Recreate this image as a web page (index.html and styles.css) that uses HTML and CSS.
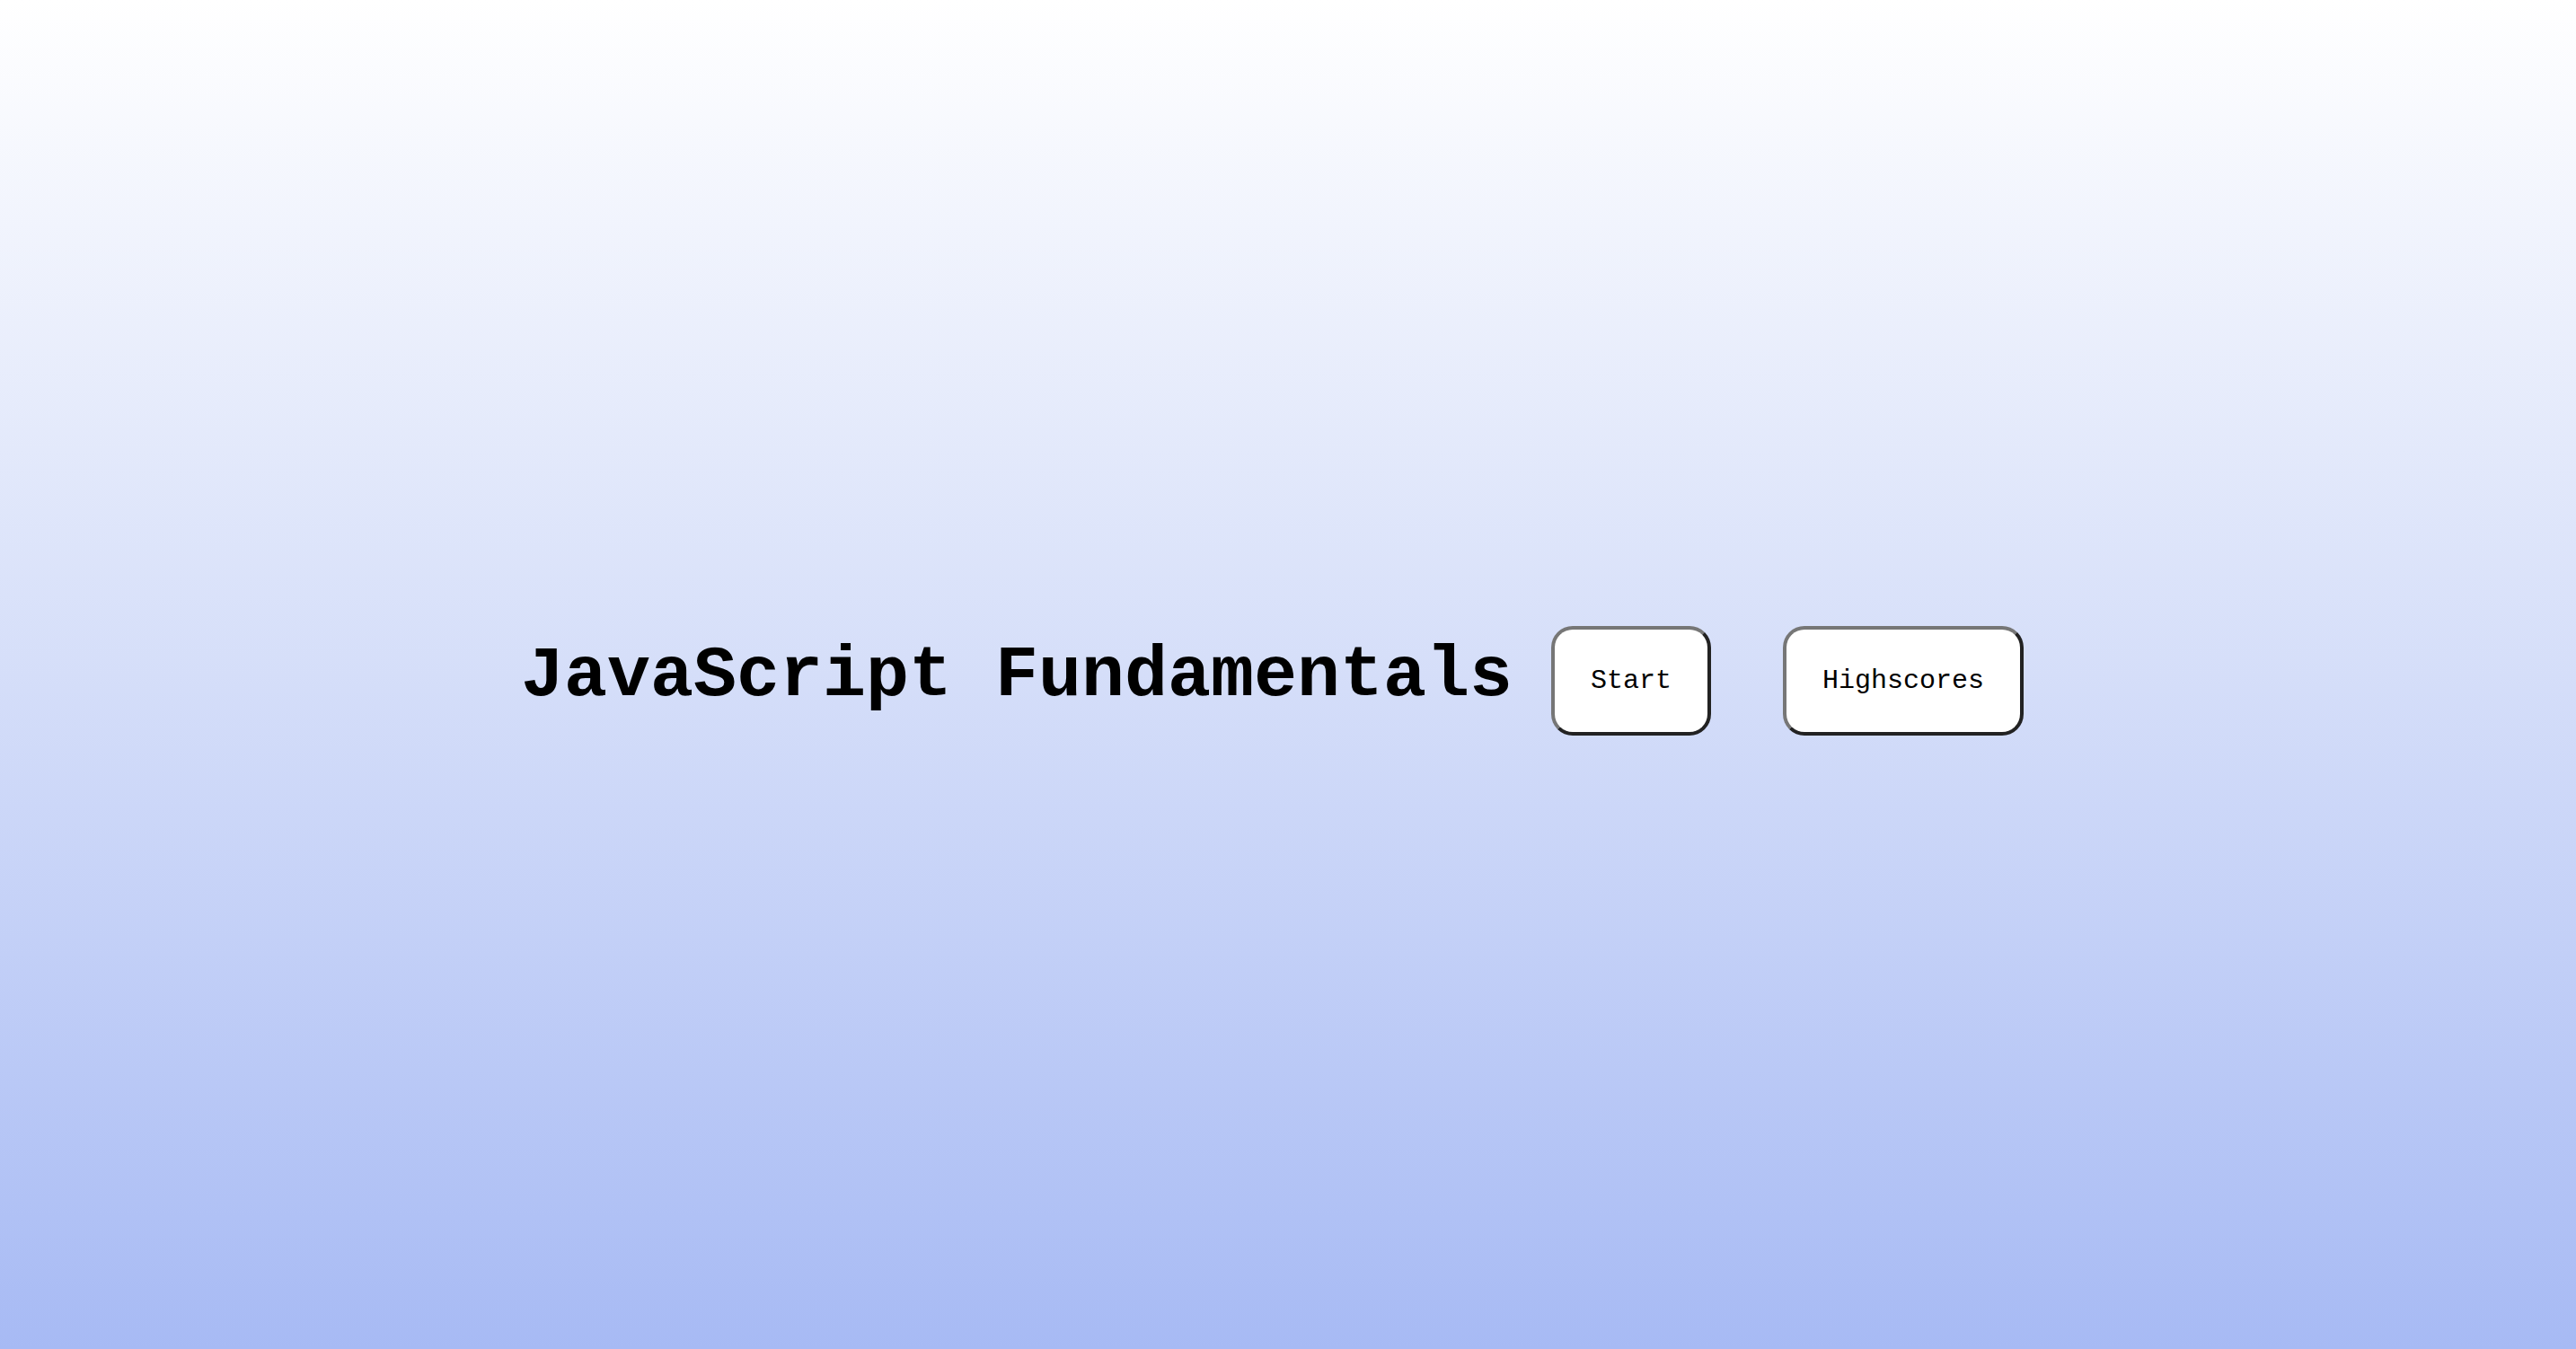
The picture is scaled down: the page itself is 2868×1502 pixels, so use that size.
FILE: index.html
```html
<!DOCTYPE html>
<html lang="en">
<head>
<meta charset="utf-8">
<title>JavaScript Fundamentals</title>
<link rel="stylesheet" href="styles.css">
</head>
<body>
<main class="home">
  <h1 class="title">JavaScript Fundamentals</h1>
  <button class="btn btn-start" type="button">Start</button>
  <button class="btn btn-scores" type="button">Highscores</button>
</main>
</body>
</html>
```
FILE: styles.css
```css
html, body {
  margin: 0;
  padding: 0;
  height: 100%;
}
body {
  background: linear-gradient(to bottom, #ffffff 0%, #d5def9 50%, #a7baf4 100%);
  font-family: "Courier New", "Liberation Mono", monospace;
  color: #000;
}
.home {
  height: 100vh;
  box-sizing: border-box;
  display: flex;
  align-items: center;
  justify-content: center;
  padding-right: 35px;
}
.title {
  margin: 4px 43px 0 0;
  font-size: 80px;
  font-weight: bold;
  line-height: 1.2;
  white-space: nowrap;
}
.btn {
  font-family: "Courier New", "Liberation Mono", monospace;
  font-size: 30px;
  line-height: 34px;
  color: #000;
  background: #fff;
  border: 4px solid;
  border-color: #767676 #222 #222 #767676;
  border-radius: 24px;
  padding: 40px;
  margin: 14px 0 0 0;
  box-sizing: border-box;
}
.btn-start {
  margin-right: 80px;
}
```
